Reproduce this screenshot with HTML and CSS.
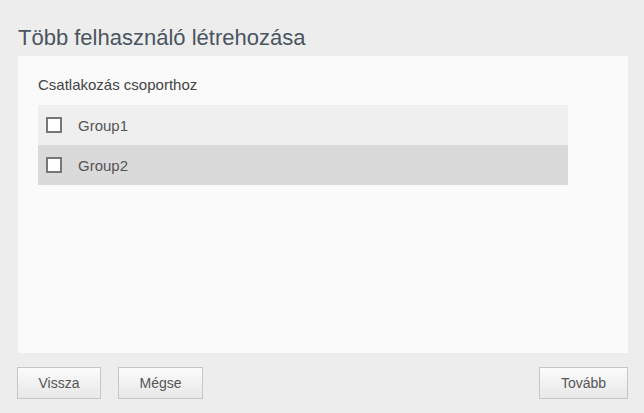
FILE: index.html
```html
<!DOCTYPE html>
<html>
<head>
<meta charset="utf-8">
<link rel="stylesheet" href="styles.css">
</head>
<body>
<div class="page">
  <h1 class="title">Több felhasználó létrehozása</h1>
  <div class="panel">
    <div class="label">Csatlakozás csoporthoz</div>
    <div class="list">
      <div class="row row-light"><span class="check"></span><span class="name">Group1</span></div>
      <div class="row row-dark"><span class="check"></span><span class="name">Group2</span></div>
    </div>
  </div>
  <div class="footer">
    <button class="btn btn-back">Vissza</button>
    <button class="btn btn-cancel">Mégse</button>
    <span class="spacer"></span>
    <button class="btn btn-next">Tovább</button>
  </div>
</div>
</body>
</html>
```

FILE: styles.css
```css
html, body {
  margin: 0;
  padding: 0;
  background: #ededed;
  font-family: "Liberation Sans", Arial, sans-serif;
}
.page {
  width: 644px;
  height: 413px;
  box-sizing: border-box;
  padding: 0 16px 0 18px;
}
.title {
  margin: 0;
  padding-top: 25px;
  height: 31px;
  font-size: 22px;
  font-weight: normal;
  color: #4a5560;
  line-height: 26px;
}
.panel {
  width: 610px;
  height: 297px;
  background: #fafafa;
  box-sizing: border-box;
  padding: 20px 60px 0 20px;
}
.label {
  font-size: 15px;
  color: #444444;
  line-height: 18px;
  height: 29px;
}
.list {
  display: flex;
  flex-direction: column;
}
.row {
  display: flex;
  align-items: center;
  height: 40px;
  padding-left: 8px;
}
.row-light { background: #efefef; }
.row-dark { background: #dadada; }
.check {
  width: 12px;
  height: 12px;
  border: 2px solid #777777;
  background: #ffffff;
}
.name {
  margin-left: 16px;
  font-size: 15px;
  color: #555555;
}
.footer {
  display: flex;
  align-items: center;
  margin-top: 14px;
  margin-left: -1px;
}
.spacer { flex: 1; }
.btn {
  height: 32px;
  box-sizing: border-box;
  border: 1px solid #c6c6c6;
  background: linear-gradient(#fbfbfb, #e8e8e8);
  font-family: "Liberation Sans", Arial, sans-serif;
  font-size: 14px;
  color: #555555;
  padding: 0;
}
.btn-back { width: 84px; }
.btn-cancel { width: 85px; margin-left: 17px; }
.btn-next { width: 89px; }
```
